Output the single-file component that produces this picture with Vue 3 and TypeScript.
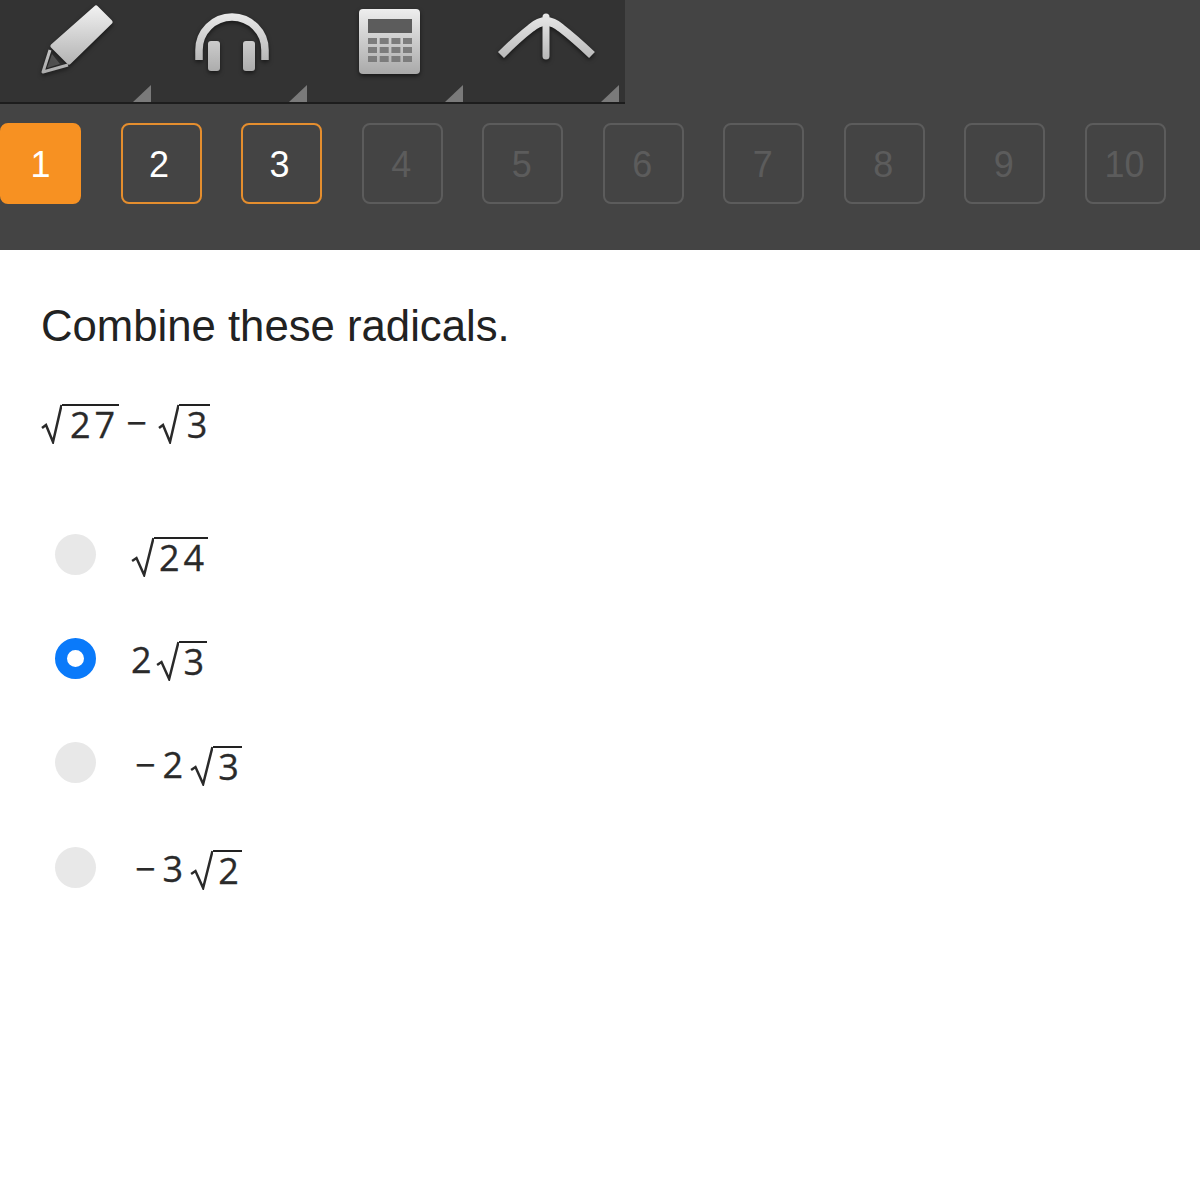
<script setup lang="ts">
interface Choice {
  coef: string;
  radicand: string;
  selected?: boolean;
}

interface NavItem {
  label: string;
  state: 'current' | 'visited' | 'locked';
}

const navItems: NavItem[] = ['1', '2', '3', '4', '5', '6', '7', '8', '9', '10'].map((label, i) => ({
  label,
  state: i === 0 ? 'current' : i < 3 ? 'visited' : 'locked',
}));

const choices: Choice[] = [
  { coef: '', radicand: '24' },
  { coef: '2', radicand: '3', selected: true },
  { coef: '−2', radicand: '3' },
  { coef: '−3', radicand: '2' },
];

const calcKeys: number[][] = [];
for (const y of [38, 47, 56]) {
  for (const x of [56, 67.7, 79.4, 91]) calcKeys.push([x, y]);
}
</script>

<template>
  <div class="page">
    <header class="header">
      <div class="toolbar">
        <div class="tool">
          <svg class="icon" viewBox="0 0 156 102">
            <defs>
              <linearGradient id="metal" gradientUnits="userSpaceOnUse" x1="0" y1="5" x2="0" y2="75">
                <stop offset="0" stop-color="#f2f2f2" />
                <stop offset="1" stop-color="#a8a8a8" />
              </linearGradient>
            </defs>
            <path fill="url(#metal)" stroke="url(#metal)" stroke-width="5" stroke-linejoin="round" d="M96 8 110 22 69 62 53 46Z" />
            <path fill="none" stroke="url(#metal)" stroke-width="3" stroke-linejoin="round" d="M50 50 43 72 68 65" />
            <path fill="#777" d="M52 54 47 68 60 64Z" opacity="0.5" />
          </svg>
          <span class="corner"></span>
        </div>
        <div class="tool">
          <svg class="icon" viewBox="0 0 156 102">
            <path fill="none" stroke="url(#metal)" stroke-width="7.5" d="M43 60V50a33 33 0 0 1 66 0V60" />
            <rect x="52" y="41" width="12" height="30" rx="3" fill="url(#metal)" />
            <rect x="87" y="41" width="12" height="30" rx="3" fill="url(#metal)" />
          </svg>
          <span class="corner"></span>
        </div>
        <div class="tool">
          <svg class="icon" viewBox="0 0 156 102">
            <rect x="47" y="9" width="61" height="65" rx="4" fill="url(#metal)" />
            <rect x="56" y="19" width="44" height="14" fill="#5c5c5c" />
            <rect v-for="k in calcKeys" :key="k.join()" :x="k[0]" :y="k[1]" width="9" height="6" fill="#7c7c7c" />
          </svg>
          <span class="corner"></span>
        </div>
        <div class="tool">
          <svg class="icon" viewBox="0 0 156 102">
            <path fill="none" stroke="url(#metal)" stroke-width="8.5" stroke-linejoin="round" d="M33 55Q50 38 63 28 78 15 93 28 106 38 124 55" />
            <path fill="none" stroke="url(#metal)" stroke-width="7" stroke-linecap="round" d="M78 17V56" />
          </svg>
          <span class="corner"></span>
        </div>
      </div>
      <nav class="nav">
        <div v-for="item in navItems" :key="item.label" class="nav-box" :class="item.state">{{ item.label }}</div>
      </nav>
    </header>

    <main class="content">
      <h1 class="prompt">Combine these radicals.</h1>
      <div class="math problem">
        <span class="radical">
          <svg class="root" viewBox="0 0 21 40" preserveAspectRatio="none"><path d="M1 24 5 21 12 38 20.5 1" /></svg>
          <span class="radicand wide">27</span>
        </span>
        <span class="minus">−</span>
        <span class="radical">
          <svg class="root" viewBox="0 0 21 40" preserveAspectRatio="none"><path d="M1 24 5 21 12 38 20.5 1" /></svg>
          <span class="radicand">3</span>
        </span>
      </div>
      <ul class="choices">
        <li v-for="choice in choices" :key="choice.coef + choice.radicand" class="choice">
          <span class="radio" :class="{ selected: choice.selected }"></span>
          <span class="math">
            <span v-if="choice.coef" class="coef" :class="{ signed: choice.coef.length > 1 }">{{ choice.coef }}</span>
            <span class="radical">
              <svg class="root" viewBox="0 0 21 40" preserveAspectRatio="none"><path d="M1 24 5 21 12 38 20.5 1" /></svg>
              <span class="radicand" :class="{ wide: choice.radicand.length > 1 }">{{ choice.radicand }}</span>
            </span>
          </span>
        </li>
      </ul>
    </main>
  </div>
</template>

<style>
body {
  background: #fff;
}
</style>

<style scoped>
.page {
  width: 1200px;
  height: 1200px;
  font-family: "Liberation Sans", Arial, sans-serif;
  background: #fff;
  overflow: hidden;
}

.header {
  height: 250px;
  background: #444;
}

.toolbar {
  display: flex;
  width: 625px;
  height: 104px;
  background: #333;
  border-bottom: 2px solid #1d1d1d;
  box-sizing: border-box;
}

.tool {
  position: relative;
  width: 156px;
  height: 102px;
}

.icon {
  display: block;
  width: 156px;
  height: 102px;
  filter: blur(0.7px) drop-shadow(0 2px 2px rgba(0, 0, 0, 0.55));
}

.corner {
  position: absolute;
  right: 5px;
  bottom: 0;
  width: 18px;
  height: 17px;
  background: #7a7a7a;
  clip-path: polygon(100% 0, 100% 100%, 0 100%);
}

.nav {
  display: flex;
  justify-content: space-between;
  width: 1166px;
  padding-top: 19px;
}

.nav-box {
  display: flex;
  align-items: center;
  justify-content: center;
  width: 81px;
  height: 81px;
  box-sizing: border-box;
  border: 2px solid #5c5c5c;
  border-radius: 8px;
  padding: 3px 2px 0 0;
  font-size: 36px;
  color: #5c5c5c;
}

.nav-box.current {
  background: #f79122;
  border-color: #f79122;
  color: #fff;
  padding-right: 0;
}

.nav-box.visited {
  border-color: #e58e2e;
  color: #fff;
  padding-right: 4px;
}

.content {
  padding: 51px 0 0 41px;
}

.prompt {
  margin: 0;
  font-size: 43.7px;
  line-height: 50px;
  font-weight: 400;
  color: #222;
}

.math {
  display: inline-flex;
  align-items: flex-end;
  font-family: "Open Sans", sans-serif;
  font-size: 36px;
  line-height: 34px;
  color: #2a2a2a;
  -webkit-text-stroke: 0.3px #2a2a2a;
}

.problem {
  display: flex;
  margin-top: 53px;
}

.radical {
  display: inline-flex;
  align-items: flex-start;
}

.root {
  display: block;
  width: 21px;
  height: 40px;
  flex: none;
}

.root path {
  fill: none;
  stroke: #2a2a2a;
  stroke-width: 2.5;
  vector-effect: non-scaling-stroke;
}

.radicand {
  border-top: 2px solid #222;
  padding: 2px 3px 0 8px;
}

.radicand.wide {
  letter-spacing: 4px;
  padding: 2px 0 0 8px;
}

.minus {
  padding: 0 11px 4px 7px;
}

.coef {
  padding-right: 4px;
  padding-bottom: 4px;
}

.coef.signed {
  letter-spacing: 7px;
  padding-left: 4px;
  padding-right: 0;
}

.choices {
  list-style: none;
  margin: 58px 0 0;
  padding: 0;
}

.choice {
  display: flex;
  align-items: center;
  gap: 35px;
  height: 104.3px;
  padding-left: 14px;
}

.choice .math {
  margin-top: 6px;
}

.choice .root {
  width: 23px;
}

.choice .radicand {
  padding-left: 5px;
}

.radio {
  width: 41px;
  height: 41px;
  box-sizing: border-box;
  border-radius: 50%;
  background: #e8e8e8;
  flex: none;
}

.radio.selected {
  background: #fff;
  border: 12px solid #0a7afa;
}
</style>
